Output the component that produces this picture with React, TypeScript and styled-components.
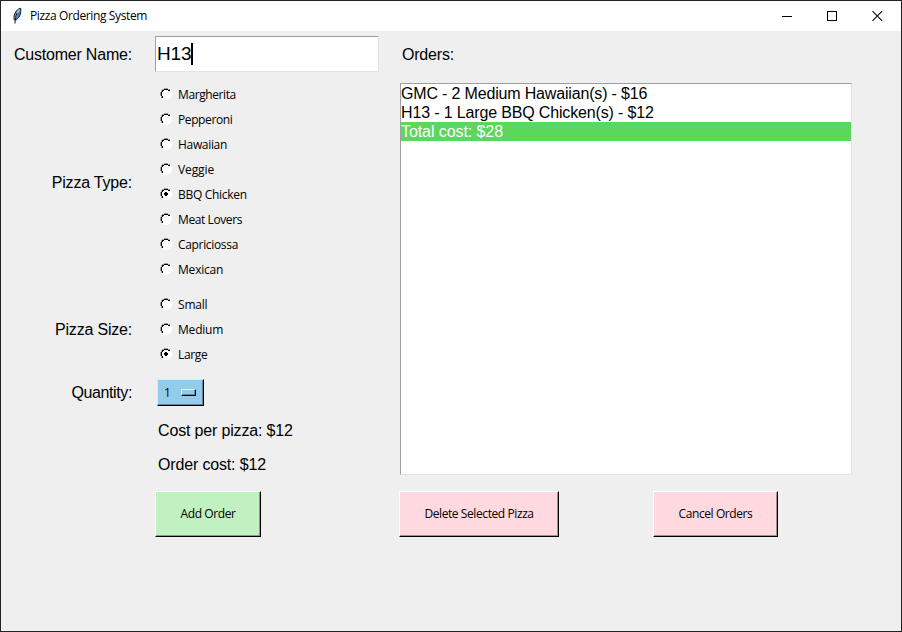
import React, { useState } from "react";
import styled, { createGlobalStyle } from "styled-components";

const GlobalStyle = createGlobalStyle`
  *, *::before, *::after { box-sizing: border-box; }
  body { margin: 0; background: #efefef; }
`;

const arial = `"Liberation Sans", Arial, sans-serif`;
const ui = `"Segoe UI", "Open Sans", "Noto Sans", sans-serif`;

const Window = styled.div`
  display: flex;
  flex-direction: column;
  width: 902px;
  height: 632px;
  border: 1px solid #222226;
  background: #efefef;
  color: #000;
  overflow: hidden;
`;

const TitleBar = styled.header`
  display: flex;
  align-items: center;
  flex: none;
  height: 30px;
  padding-left: 8px;
  background: #fff;
`;

const TitleText = styled.span`
  flex: 1;
  margin-left: 5px;
  font: 12px/16px ${ui};
  letter-spacing: -0.38px;
`;

const WindowControls = styled.div`
  display: flex;
  align-items: center;
  gap: 35px;
  height: 28px;
  padding-right: 18px;
`;

const Body = styled.main`
  display: flex;
  flex: 1;
`;

const OrderForm = styled.section`
  display: flex;
  flex-direction: column;
  width: 398px;
  padding-top: 5px;
`;

const FormRow = styled.div<{ $height: number; $gap?: number }>`
  display: grid;
  grid-template-columns: 131px 224px;
  column-gap: 23px;
  align-items: center;
  height: ${(p) => p.$height}px;
  margin-top: ${(p) => p.$gap ?? 0}px;
`;

const Label = styled.label<{ $spacing?: number; $drop?: number }>`
  grid-column: 1;
  padding-top: ${(p) => p.$drop ?? 0}px;
  text-align: right;
  font: 16px/18px ${arial};
  letter-spacing: ${(p) => p.$spacing ?? -0.2}px;
  white-space: nowrap;
`;

const Entry = styled.div`
  display: flex;
  align-items: center;
  height: 36px;
  padding-left: 1px;
  background: #fff;
  border: 1px solid;
  border-color: #a0a0a0 #e3e3e3 #e3e3e3 #a0a0a0;
  font: 19px/22px ${arial};
  letter-spacing: -0.2px;
`;

const Caret = styled.span`
  width: 2px;
  height: 22px;
  background: #000;
`;

const RadioGroup = styled.div`
  display: flex;
  flex-direction: column;
`;

const RadioRow = styled.div`
  display: flex;
  align-items: center;
  height: 25px;
  padding-left: 5px;
  gap: 6px;
  font: 12px/16px ${ui};
  cursor: default;
`;

const RadioText = styled.span<{ $spacing: number }>`
  letter-spacing: ${(p) => p.$spacing}px;
  white-space: nowrap;
`;

const RadioIcon = styled.svg`
  flex: none;
  margin-top: -2px;
`;

const OptionMenu = styled.div`
  display: flex;
  align-items: center;
  justify-content: space-between;
  width: 47px;
  height: 27px;
  margin-left: 2px;
  padding: 0 7px 0 6px;
  background: #93cbea;
  border: 1px solid;
  border-color: #c4f5ff #000 #000 #c4f5ff;
  box-shadow: inset -1px -1px #62879c;
  font: 12px/16px ${ui};
`;

const MenuIndicator = styled.span`
  width: 15px;
  height: 7px;
  margin-top: -1px;
  border: 1px solid;
  border-color: #d5ffff #000 #000 #d5ffff;
  box-shadow: inset -1px -1px #62879c;
`;

const CostText = styled.div`
  grid-column: 2;
  padding-left: 3px;
  font: 16px/18px ${arial};
  letter-spacing: -0.16px;
  white-space: nowrap;
`;

const Button = styled.button<{ $tone: "green" | "pink"; $width: number }>`
  width: ${(p) => p.$width}px;
  height: 46px;
  padding: 0;
  background: ${(p) => (p.$tone === "green" ? "#c1f0c1" : "#ffd9df")};
  border: 1px solid;
  border-color: #fff #000 #000 #fff;
  border-radius: 0;
  box-shadow: inset -1px -1px ${(p) => (p.$tone === "green" ? "#7f9f7f" : "#a38c8f")};
  color: #000;
  font: 12px/16px ${ui};
  letter-spacing: -0.41px;
  white-space: nowrap;
`;

const FormAction = styled.div`
  grid-column: 2;
  height: 46px;
`;

const OrdersPanel = styled.section`
  display: flex;
  flex-direction: column;
  width: 453px;
`;

const OrdersTitle = styled.h2`
  margin: 15px 0 19px 3px;
  font: 16px/18px ${arial};
  letter-spacing: -0.2px;
`;

const OrderList = styled.ul`
  width: 452px;
  height: 392px;
  margin: 0 0 16px 1px;
  padding: 0;
  background: #fff;
  border: 1px solid;
  border-color: #a0a0a0 #e3e3e3 #e3e3e3 #a0a0a0;
  list-style: none;
`;

const OrderItem = styled.li<{ $selected?: boolean; $spacing: number }>`
  height: 19px;
  background: ${(p) => (p.$selected ? "#5bd75b" : "transparent")};
  color: ${(p) => (p.$selected ? "#fff" : "#000")};
  font: 16px/19px ${arial};
  letter-spacing: ${(p) => p.$spacing}px;
  white-space: nowrap;
`;

const OrderActions = styled.div`
  display: flex;
  gap: 94px;
`;

/* Sunken classic radio: dark upper-left arc, white lower-right arc. */
const Radio = ({ checked }: { checked: boolean }) => (
  <RadioIcon width="12" height="12" viewBox="0 0 12 12" shapeRendering="crispEdges">
    <path d="M4 0h4v1h2v1h1v2h1v4h-1v2h-1v1H8v1H4v-1H2v-1H1V8H0V4h1V2h1V1h2z" fill="#fff" />
    <path d="M4 0h4v1H4zM2 1h2v1H2zM8 1h2v1H8zM1 2h1v2H1zM0 4h1v4H0zM1 8h1v2H1z" fill="#a0a0a0" />
    <path d="M4 1h4v1H4zM2 2h2v1H2zM8 2h2v1H8zM2 3h1v1H2zM1 4h1v4H1zM2 8h1v2H2z" fill="#000" />
    {checked && <path d="M5 4h2v1h1v2H7v1H5V7H4V5h1z" fill="#000" />}
  </RadioIcon>
);

const Feather = () => (
  <svg width="16" height="18" viewBox="0 0 16 18">
    <path d="M11.700 1.300c-2.500.3-4.700 2.400-6 5.500-.8 2-.9 4.300-.4 6.200l2.200-.3c1.700-1.500 3.200-3.200 3.800-5.500.6-2 .7-4.100.4-5.900z" fill="#4a80b8" stroke="#17202b" strokeWidth="1" />
    <path d="M10.500 2.500C8.200 5 6.800 8 6.100 11.500" stroke="#bad7ef" strokeWidth="1.300" fill="none" />
    <path d="M8.200 5.800C6.700 9 6 12 6 16.500" stroke="#0b1118" strokeWidth="1" fill="none" />
  </svg>
);

const pizzaTypes: [string, number][] = [
  ["Margherita", -0.4],
  ["Pepperoni", -0.4],
  ["Hawaiian", -0.32],
  ["Veggie", -0.1],
  ["BBQ Chicken", -0.3],
  ["Meat Lovers", -0.4],
  ["Capriciossa", -0.33],
  ["Mexican", -0.2],
];

const pizzaSizes: [string, number][] = [
  ["Small", -0.2],
  ["Medium", -0.2],
  ["Large", -0.35],
];

type ChoiceProps = { options: [string, number][]; value: string; onChange: (v: string) => void };

const Choices = ({ options, value, onChange }: ChoiceProps) => (
  <RadioGroup role="radiogroup">
    {options.map(([name, spacing]) => (
      <RadioRow key={name} role="radio" aria-checked={name === value} onClick={() => onChange(name)}>
        <Radio checked={name === value} />
        <RadioText $spacing={spacing}>{name}</RadioText>
      </RadioRow>
    ))}
  </RadioGroup>
);

export default function App() {
  const [type, setType] = useState("BBQ Chicken");
  const [size, setSize] = useState("Large");

  return (
    <>
      <GlobalStyle />
      <Window>
        <TitleBar>
          <Feather />
          <TitleText>Pizza Ordering System</TitleText>
          <WindowControls>
            <svg width="10" height="10" shapeRendering="crispEdges"><path d="M0 5h10v1H0z" /></svg>
            <svg width="10" height="10" shapeRendering="crispEdges"><path d="M0 0h10v10H0zM1 1v8h8V1z" fillRule="evenodd" /></svg>
            <svg width="11" height="10"><path d="M.5.200l9.600 9.600M10.100.2L.5 9.800" stroke="#000" strokeWidth="1.100" /></svg>
          </WindowControls>
        </TitleBar>
        <Body>
          <OrderForm>
            <FormRow $height={36}>
              <Label $drop={1}>Customer Name:</Label>
              <Entry>H13<Caret /></Entry>
            </FormRow>
            <FormRow $height={200} $gap={10}>
              <Label $drop={2}>Pizza Type:</Label>
              <Choices options={pizzaTypes} value={type} onChange={setType} />
            </FormRow>
            <FormRow $height={75} $gap={10}>
              <Label>Pizza Size:</Label>
              <Choices options={pizzaSizes} value={size} onChange={setSize} />
            </FormRow>
            <FormRow $height={27} $gap={12}>
              <Label $spacing={-0.38}>Quantity:</Label>
              <OptionMenu>1<MenuIndicator /></OptionMenu>
            </FormRow>
            <FormRow $height={34} $gap={8}>
              <CostText>Cost per pizza: $12</CostText>
            </FormRow>
            <FormRow $height={34}>
              <CostText>Order cost: $12</CostText>
            </FormRow>
            <FormRow $height={46} $gap={9}>
              <FormAction>
                <Button $tone="green" $width={106}>Add Order</Button>
              </FormAction>
            </FormRow>
          </OrderForm>
          <OrdersPanel>
            <OrdersTitle>Orders:</OrdersTitle>
            <OrderList>
              <OrderItem $spacing={-0.17}>GMC - 2 Medium Hawaiian(s) - $16</OrderItem>
              <OrderItem $spacing={-0.15}>H13 - 1 Large BBQ Chicken(s) - $12</OrderItem>
              <OrderItem $selected $spacing={-0.08}>Total cost: $28</OrderItem>
            </OrderList>
            <OrderActions>
              <Button $tone="pink" $width={160}>Delete Selected Pizza</Button>
              <Button $tone="pink" $width={125}>Cancel Orders</Button>
            </OrderActions>
          </OrdersPanel>
        </Body>
      </Window>
    </>
  );
}
